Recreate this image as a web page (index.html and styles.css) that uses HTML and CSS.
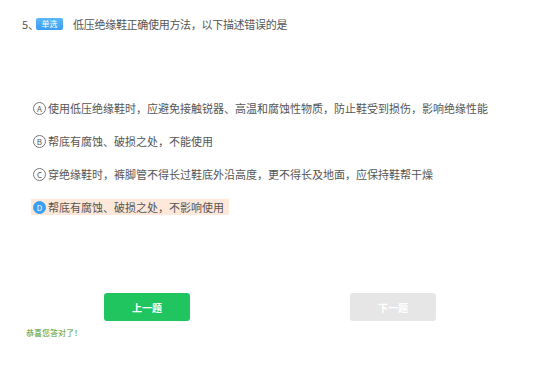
FILE: index.html
```html
<!DOCTYPE html>
<html lang="zh-CN">
<head>
  <meta charset="UTF-8" />
  <meta name="viewport" content="width=device-width, initial-scale=1.0" />
  <title>单选题</title>
  <link rel="stylesheet" href="styles.css">
</head>
<body>
  <!-- 题目 -->
  <div class="question">
    <span class="num">5、</span>
    <span class="badge">单选</span>
    <span class="title">低压绝缘鞋正确使用方法，以下描述错误的是</span>
  </div>

  <!-- 选项 -->
  <ul class="options">
    <li class="option"><span class="mark">A</span><span>使用低压绝缘鞋时，应避免接触锐器、高温和腐蚀性物质，防止鞋受到损伤，影响绝缘性能</span></li>
    <li class="option"><span class="mark">B</span><span>帮底有腐蚀、破损之处，不能使用</span></li>
    <li class="option"><span class="mark">C</span><span>穿绝缘鞋时，裤脚管不得长过鞋底外沿高度，更不得长及地面，应保持鞋帮干燥</span></li>
    <li class="option selected"><span class="mark">D</span><span>帮底有腐蚀、破损之处，不影响使用</span></li>
  </ul>

  <!-- 按钮 -->
  <div class="actions">
    <button class="btn prev">上一题</button>
    <button class="btn next" disabled>下一题</button>
  </div>
  <div class="result">恭喜您答对了！</div>
</body>
</html>
```

FILE: styles.css
```css
/* ===== 基本 ===== */
body {
  margin: 0;
  background: #fff;
  font-family: "Noto Sans CJK SC", "Microsoft YaHei", sans-serif;
  color: #555;
}
/* ===== 题目 ===== */
.question {
  display: flex;
  align-items: center;
  height: 14px;
  padding: 17px 0 0 22px;
  font-size: 11px;
  line-height: 14px;
}
.num {
  color: #555;
}
.badge {
  display: inline-block;
  width: 27px;
  height: 12px;
  margin-left: -3px;
  border-radius: 2px;
  background: linear-gradient(#5cb8fb, #3a9cf2);
  color: #fff;
  font-size: 8px;
  line-height: 12px;
  text-align: center;
}
.title {
  margin-left: 10px;
  letter-spacing: -0.3px;
}
/* ===== 选项 ===== */
.options {
  list-style: none;
  margin: 69px 0 0 31px;
  padding: 0;
}
.option {
  display: flex;
  align-items: center;
  width: fit-content;
  height: 16px;
  margin-bottom: 17px;
  padding: 0 5px 0 2px;
  font-size: 11px;
  color: #555;
}
.mark {
  display: inline-flex;
  justify-content: center;
  align-items: center;
  box-sizing: border-box;
  width: 13px;
  height: 13px;
  margin-right: 2px;
  border: 1px solid #777;
  border-radius: 50%;
  font-size: 8px;
  color: #555;
}
.option.selected {
  background: #fde8da;
}
.option.selected .mark {
  background: #3a9ff3;
  border-color: #3a9ff3;
  color: #fff;
}
/* ===== 按钮 ===== */
.actions {
  display: flex;
  gap: 160px;
  margin-top: 78px;
  padding-left: 104px;
}
.btn {
  width: 86px;
  height: 28px;
  border: none;
  border-radius: 3px;
  color: #fff;
  font-family: inherit;
  font-size: 10px;
  font-weight: bold;
  cursor: pointer;
}
.prev {
  background: #20c55f;
}
.next {
  background: #e6e6e6;
  cursor: default;
}
.result {
  margin: 6px 0 0 26px;
  font-size: 8px;
  line-height: 11px;
  color: #4f9a2a;
}
```
